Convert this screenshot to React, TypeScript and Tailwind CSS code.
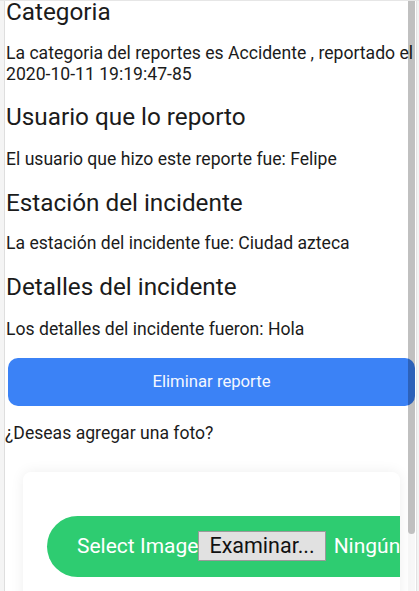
import React from "react";

export default function App() {
  return (
    <div
      className="relative h-[591px] w-[419px] overflow-hidden bg-[#f4f4f4] border-t border-[#e6e6e6] text-[#1b1b1b]"
      style={{ fontFamily: "Roboto, 'Noto Sans', Arial, sans-serif" }}
    >
      <div className="ml-[4px] mr-[3px] h-full border-l border-[#dedede] bg-white pl-[1px] pr-[1px]">
        <div className="flex flex-col">
          <h2 className="mt-[-1px] text-[24.3px] leading-[24px] font-normal">Categoria</h2>
          <p className="mt-[18.5px] text-[17.6px] leading-[21px]">
            La categoria del reportes es Accidente , reportado el 2020-10-11 19:19:47-85
          </p>
          <h2 className="mt-[18.3px] text-[24.3px] leading-[28px] font-normal">Usuario que lo reporto</h2>
          <p className="mt-[18.7px] text-[17.6px] leading-[21px]">El usuario que hizo este reporte fue: Felipe</p>
          <h2 className="mt-[18.3px] text-[24.3px] leading-[28px] font-normal">Estación del incidente</h2>
          <p className="mt-[16.7px] text-[17.6px] leading-[21px]">La estación del incidente fue: Ciudad azteca</p>
          <h2 className="mt-[18.3px] text-[24.3px] leading-[28px] font-normal">Detalles del incidente</h2>
          <p className="mt-[18.7px] text-[17.6px] leading-[21px]">Los detalles del incidente fueron: Hola</p>
          <button className="mt-[17.5px] ml-[2px] flex h-[48px] items-center justify-center rounded-[10px] bg-[#3b82f6] text-[16.7px] text-[#f4f7ff]">
            Eliminar reporte
          </button>
          <p className="mt-[17.5px] ml-[-1px] text-[17.6px] leading-[21px]">¿Deseas agregar una foto?</p>
          <div className="mt-[27.5px] ml-[17px] h-[200px] w-[377px] overflow-hidden rounded-[8px] bg-white shadow-[0_0_14px_rgba(0,0,0,0.07)]">
            <div className="mt-[44px] ml-[24px] flex h-[61px] w-[420px] shrink-0 items-center whitespace-nowrap rounded-full bg-[#2ecc71] pl-[30px] text-[21px] text-white">
              <span>Select Image</span>
              <span className="flex h-[30px] items-center border border-[#9a9a9a] bg-[#e1e1e1] px-[10px] text-[21.5px] text-[#111]">
                Examinar...
              </span>
              <span className="ml-[8px]">Ningún archivo seleccionado.</span>
            </div>
          </div>
        </div>
      </div>
      {/* overlay scrollbar */}
      <div className="absolute right-[4px] top-0 h-full w-[7px] bg-black/[0.03]">
        <div className="h-[533px] w-full rounded-b-[4px] bg-black/[0.22]" />
      </div>
      <div className="absolute right-[2px] top-0 h-full w-[1px] bg-[#e2e2e2]" />
    </div>
  );
}
